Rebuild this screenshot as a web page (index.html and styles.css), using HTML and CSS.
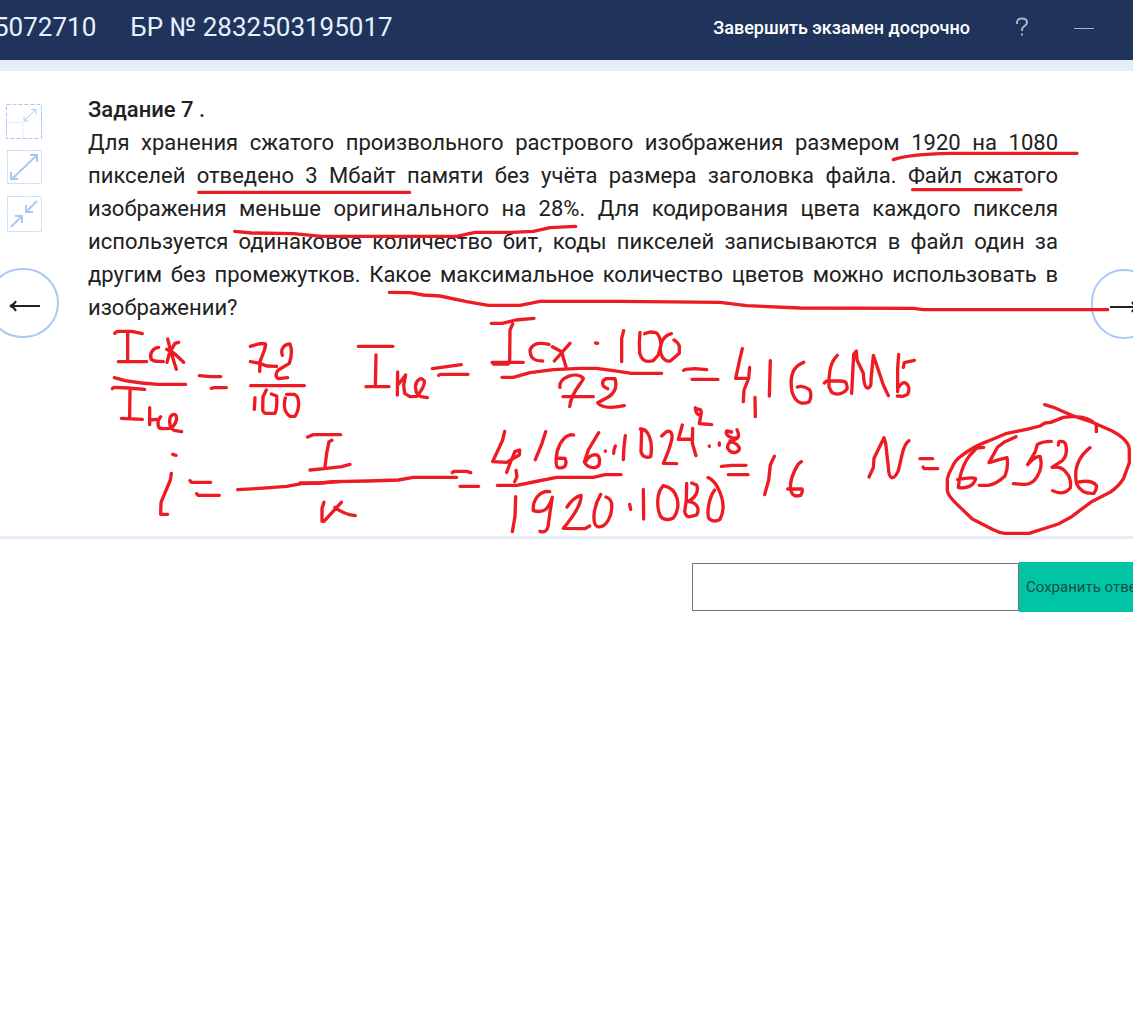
FILE: index.html
```html
<!DOCTYPE html>
<html lang="ru">
<head>
<meta charset="utf-8">
<meta name="viewport" content="width=device-width, initial-scale=1">
<title>Задание 7</title>
<link rel="stylesheet" href="styles.css">
</head>
<body>
<header class="topbar">
  <div class="ids"><span>5072710</span><span>БР № 2832503195017</span></div>
  <div class="actions">
    <button class="finish" type="button">Завершить экзамен досрочно</button>
    <button class="icon-btn" type="button" aria-label="Помощь">
      <svg width="14" height="20" viewBox="0 0 14 20"><path d="M2 7V5.500C2 3 4 1.500 7 1.500S12 3 12 5.500C12 9 7 9 7 12.500V14M7 16.500V18.500"/></svg>
    </button>
    <button class="icon-btn" type="button" aria-label="Свернуть">
      <svg width="20" height="20" viewBox="0 0 20 20"><path d="M0 11.500H20"/></svg>
    </button>
  </div>
</header>
<main>
  <section class="task">
    <nav class="side">
      <div class="tools">
        <button class="tool" type="button" aria-label="Обычный размер">
          <svg width="36" height="36" viewBox="0 0 36 36"><rect x=".5" y=".5" width="35" height="34" stroke-dasharray="4 2"/><path d="M.5 18.500V34M35.500 1V34" opacity=".6"/><path d="M.5 18.500H17V34" opacity=".35"/><path d="M18.500 16.500 29.500 5.500M25 5.500H30V10M18 12.500V17H22.500"/></svg>
        </button>
        <button class="tool" type="button" aria-label="Увеличить">
          <svg width="36" height="36" viewBox="0 0 36 36"><rect x="1.500" y=".5" width="34" height="33" stroke-dasharray="2 1" opacity=".8"/><path class="bold" d="M6 29 31 5M24 5H31V12M5 22V29H12"/></svg>
        </button>
        <button class="tool" type="button" aria-label="Уменьшить">
          <svg width="36" height="36" viewBox="0 0 36 36"><rect x="1.500" y=".5" width="34" height="35" stroke-dasharray="2 1" opacity=".8"/><path class="bold" d="M31 5 20 16M20 9V16H27M5 31 16 20M9 20H16V27"/></svg>
        </button>
      </div>
      <button class="round" type="button" aria-label="Предыдущее задание">
        <svg width="32" height="14" viewBox="0 0 32 14"><path d="M1 7H31"/><path d="M7 2Q5 6 1 7 5 8 7 12"/></svg>
      </button>
    </nav>
    <article class="text">
      <h1>Задание 7 .</h1>
      <p>Для хранения сжатого произвольного растрового изображения размером 1920 на 1080 пикселей отведено 3 Мбайт памяти без учёта размера заголовка файла. Файл сжатого изображения меньше оригинального на 28%. Для кодирования цвета каждого пикселя используется одинаковое количество бит, коды пикселей записываются в файл один за другим без промежутков. Какое максимальное количество цветов можно использовать в изображении?</p>
    </article>
    <nav class="next">
      <button class="round" type="button" aria-label="Следующее задание">
        <svg width="28" height="14" viewBox="0 0 28 14"><path d="M0 7H27"/><path d="M22 2Q24 6 28 7 24 8 22 12"/></svg>
      </button>
    </nav>
    <svg class="ink" width="1140" height="540" viewBox="0 0 1140 540" aria-hidden="true">
      <!-- underlines in the left part of the text -->
      <g transform="translate(180 130) scale(.33333)">
        <path d="M56 187H689M164 304 215 309 340 311 425 319H830L885 307H995L1060 304 1110 293 1187 289"/>
        <path d="M628 487 690 488 730 495 780 498 860 515 925 526H1020L1080 514H1320"/>
      </g>
      <!-- underlines in the right part of the text -->
      <g transform="translate(860 130) scale(.33333)">
        <path d="M100 89C130 78 170 72 270 70H651M158 179H483M-720 514-420 517-340 527-180 534 160 535 190 539H743"/>
      </g>
      <!-- ratio of the compressed size to the original size -->
      <g transform="translate(100 320) scale(.33333)">
        <path d="M44 40 52 34H95L127 41M83 38V124M55 125H140M176 82C157 84 148 102 153 117 164 128 177 122 190 125M203 57 214 100 229 148M236 67 225 70 208 100 201 127M200 88 222 100 251 127"/>
        <path d="M43 173 75 182 125 189 175 193H257M37 206 41 202 85 204 134 208M90 208 89 290M64 295 127 298M149 263V314M150 300 170 298M182 290C170 303 172 326 185 326H205C233 318 235 283 222 283 204 285 205 323 222 331L245 335"/>
        <path d="M298 167 332 170H362M334 205 342 203H379M451 79 475 72Q495 68 497 74L494 88 480 125 479 154M451 125 480 130 500 138 530 139M547 106C540 85 555 72 570 72 578 93 575 110 568 130L535 150C527 158 525 170 535 176L563 173M452 197H613"/>
        <path d="M465 233 463 268M499 210 489 230 488 270Q490 279 498 280L525 280Q532 265 530 228L514 222M556 234C549 260 556 280 570 289H585C600 265 600 230 583 223H560"/>
        <path d="M218 403 228 406M214 460 211 480 183 547 182 583H203M270 482 274 487H332M290 521 294 526H358M413 509 480 505 560 499 605 491 660 489 720 485"/>
      </g>
      <g transform="translate(320 310) scale(.33333)">
        <path d="M115 109H219M168 135 166 228M138 230H207M233 186 232 255M257 195 236 222M257 195 251 225 254 250 270 260 290 259C302 245 315 225 313 213 303 199 288 210 286 230L289 247 302 260 322 263M337 176 380 170 424 164M356 196 361 193H444"/>
        <path d="M-37 381-20 374H62M36 391 27 395 20 430 15 470M-30 480 20 475 65 470 90 463M12 577 6 595V634H12L64 577M45 592Q70 613 106 617M-60 519 0 519 40 515 145 513 235 510 280 502H410M397 488 402 484H440L452 488M420 529H476"/>
      </g>
      <!-- original size in megabytes and the bit depth formula -->
      <g transform="translate(480 310) scale(.33333)">
        <path d="M34 40H67L107 30 162 25M98 42 90 60 89 155M36 157H130M40 162H85M207 103C180 97 160 98 150 120 151 143 160 153 188 153M217 110 245 125Q250 145 258 170M270 100 223 153M347 99 353 100M431 62 425 85V155M480 67 478 100 479 130C487 155 500 157 520 152L535 135 543 105Q540 75 528 68L510 66 494 71M574 71C542 80 533 118 548 143Q560 157 572 152L598 130V108Q592 95 582 90"/>
        <path d="M66 202H100L150 188 220 179 300 175H350L400 182 455 190H545M240 232C234 203 290 182 310 205 311 215 275 240 269 290M249 260H340M383 236C364 230 363 212 379 206H405C412 230 405 248 385 261L353 278C365 296 400 294 433 287"/>
        <path d="M74 364 68 390 38 455 80 457 118 435 119 420 105 424 90 460 80 487M108 481 111 500 104 515M197 365 186 400 166 449M281 375C262 370 250 385 240 402 226 430 225 470 235 473 250 476 258 470 258 455L255 445 233 444M356 368 325 420 313 456C325 478 350 476 357 465Q363 435 345 434 328 436 319 452M376 423V424M406 408 402 420 401 430M436 377 432 410 430 449M485 360 483 425C488 442 500 444 512 440 520 395 505 355 481 357M545 378 561 364Q578 361 576 385 570 415 550 460L590 461M607 345 595 388 638 387M638 355 637 400 648 437"/>
        <path d="M52 526H110L175 513 230 502H340L375 494H423M107 560 105 620 97 665M209 545C180 540 157 570 160 602 190 610 205 600 217 562L211 600 204 650Q200 670 180 664M261 591Q280 562 303 556C306 585 275 625 250 655L315 656 329 648M362 553C340 590 335 640 352 650 380 655 398 615 395 580Q392 566 378 561M449 583 452 598M490 538 491 627M550 527C530 545 529 590 541 618 550 632 570 630 580 624 605 590 595 535 550 527"/>
      </g>
      <g transform="translate(680 330) scale(.33333)">
        <path d="M11 121 16 118 45 116 80 119M36 148H114M187 56 180 85 167 145 205 145M209 112 206 145 192 180 190 215M225 202 226 260M271 92 268 198M371 97C335 110 329 145 336 185 347 222 370 224 388 215 395 200 393 185 388 179Q370 165 352 171M472 76C453 95 446 120 447 170L455 187C473 198 492 190 501 177 503 155 495 154 480 153H440L433 159M515 190 521 73 529 63 531 90 550 130Q552 174 563 174 575 172 573 150L580 76 590 105 610 165 625 197M656 73 653 115V185M655 173Q665 157 675 158C688 165 689 180 683 193L670 199 652 198M670 112 673 98 703 91"/>
        <path d="M46 233Q47 252 58 255 68 249 61 239L48 236M64 248 58 281 95 284M88 348V349M118 339V346M171 299Q179 315 173 323C154 328 135 316 140 303L155 306M171 325C150 333 137 345 145 358Q153 370 168 367C185 360 181 345 150 332M124 409 155 406H198M145 434H204M283 379 271 405 266 450 254 494M364 395 355 402C340 425 331 450 331 475Q335 499 350 498L362 496Q369 485 366 477H323"/>
        <path d="M20 460 19 510 14 545Q18 562 30 560L50 555C61 535 49 516 24 515 44 505 58 485 50 465L35 459M84 443Q98 447 112 470C132 508 135 540 120 568 108 576 93 575 85 562 81 538 89 500 104 480"/>
      </g>
      <!-- number of colours, circled -->
      <g transform="translate(850 390) scale(.33333)">
        <path d="M57 261 70 233 72 205 102 143 107 160 115 230Q116 260 125 263 135 265 145 242L157 190Q165 160 177 152M210 206H248M219 231 223 236H263"/>
        <path d="M401 172 380 174 360 195C340 220 333 245 328 270L325 292C345 297 370 290 377 266Q365 260 323 269M498 140 465 155 443 171 417 218Q450 208 471 203 476 230 465 258 440 282 415 286H388M604 154Q575 155 562 163L556 185 533 224Q555 198 570 199 580 230 560 262 545 285 520 283L490 281M625 165 627 155Q645 150 648 168 653 195 637 212L606 232Q634 227 648 247 665 265 661 293C645 314 622 310 608 302M720 173C680 205 672 245 680 282Q695 313 732 310 740 300 740 287 725 268 687 276"/>
        <path d="M584 44 610 52 665 76 725 96 785 122Q838 150 838 180V218Q830 240 820 267 805 290 780 307L722 337 662 382 625 402 537 430H465Q447 428 430 419L367 387 318 340Q292 315 292 300V268Q295 250 305 235 315 210 335 197 370 170 410 155L467 131 530 118 570 108 585 99 602 97 640 82C690 75 720 82 739 105V125"/>
      </g>
    </svg>
  </section>
  <form class="answer">
    <input type="text" aria-label="Ответ">
    <button type="button">Сохранить ответ</button>
  </form>
</main>
</body>
</html>
```
FILE: styles.css
```css
* { box-sizing: border-box; }
body {
  margin: 0;
  background: #fff;
  color: #212121;
  font-family: Roboto, "Noto Sans", sans-serif;
  overflow-x: hidden;
}
button {
  margin: 0;
  padding: 0;
  border: 0;
  background: none;
  font-family: inherit;
  cursor: pointer;
}
svg {
  display: block;
  fill: none;
}
.topbar {
  display: flex;
  justify-content: space-between;
  align-items: center;
  height: 60px;
  padding-right: 39px;
  padding-bottom: 6px;
  background: #20335b;
  color: #e6f1ff;
}
.ids {
  display: flex;
  gap: 34px;
  margin-left: -6px;
  font-size: 26px;
  white-space: nowrap;
}
.actions {
  display: flex;
  align-items: center;
  gap: 45px;
}
.finish {
  color: #fff;
  font-size: 18px;
  font-weight: 500;
  white-space: nowrap;
}
.icon-btn svg {
  stroke: #aab3c6;
  stroke-width: 2;
}
.icon-btn:last-child svg { stroke-width: 1; }
.task {
  position: relative;
  display: grid;
  grid-template-columns: 88px 1fr 75px;
  border-top: 11px solid #e6edf9;
  border-bottom: 3px solid #e6edf9;
}
.side { padding-top: 33px; }
.tools {
  display: flex;
  flex-direction: column;
  gap: 10px;
  padding-left: 6px;
}
.tool { width: 36px; }
.tool svg { stroke: #a9c8f5; }
.tool .bold { stroke-width: 2; }
.round {
  display: flex;
  align-items: center;
  justify-content: center;
  width: 72px;
  height: 70px;
  padding-top: 6px;
  border: 2px solid #a9c8f5;
  border-radius: 35px;
}
.round svg {
  stroke: #222;
  stroke-width: 2;
}
.side .round {
  margin: 36px 0 0 -13px;
  padding-left: 4px;
}
.next { padding: 198px 0 0 33px; }
.next .round { width: 66px; }
.text { padding: 22px 0 212px; }
.text h1, .text p {
  margin: 0;
  font-size: 22px;
  line-height: 33px;
}
.text h1 { font-weight: 500; }
.text p { text-align: justify; }
.ink {
  position: absolute;
  top: -71px;
  left: 0;
  pointer-events: none;
  stroke: #ed1c24;
  stroke-width: 10;
  stroke-linecap: round;
  stroke-linejoin: round;
}
.task { overflow-x: clip; }
.answer {
  display: flex;
  justify-content: flex-end;
  align-items: center;
  margin: 23px -16px 0 0;
}
.answer input {
  width: 327px;
  height: 48px;
  padding: 0 12px;
  border: 1px solid #767676;
  font: 18px Roboto, sans-serif;
}
.answer button {
  width: 130px;
  height: 50px;
  padding-left: 7px;
  background: #00c4a3;
  color: #124f4c;
  font-size: 15px;
  text-align: left;
  white-space: nowrap;
}
```
